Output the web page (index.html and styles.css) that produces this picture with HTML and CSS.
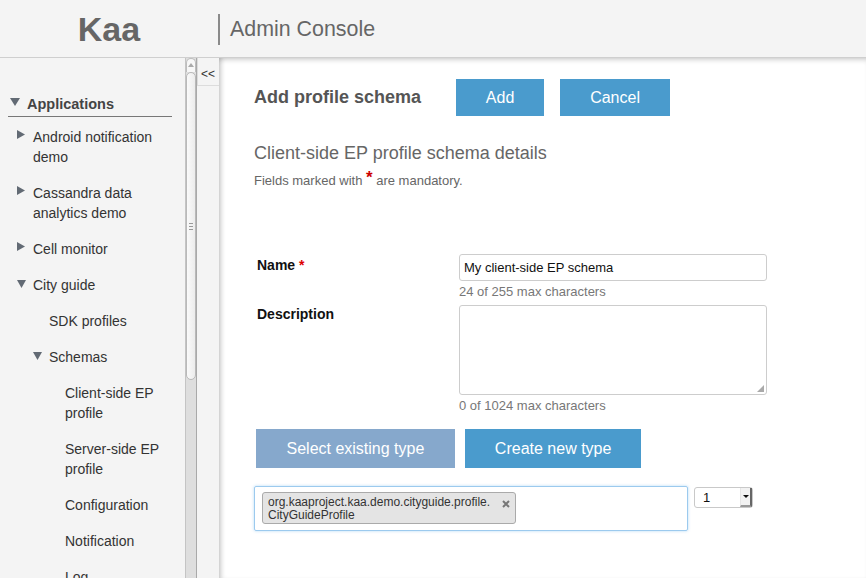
FILE: index.html
```html
<!DOCTYPE html>
<html>
<head>
<meta charset="utf-8">
<link rel="stylesheet" href="styles.css">
</head>
<body>
<header class="header">
  <div class="logo">Kaa</div>
  <div class="divider"></div>
  <div class="app-title">Admin Console</div>
</header>
<div class="layout">
  <nav class="sidebar">
    <div class="nav-title"><svg class="tri-down big" viewBox="0 0 10 8"><polygon points="0,0 10,0 5,8"/></svg>Applications</div>
    <ul class="tree">
      <li class="node l1"><span class="tcol"><svg class="tri-right" viewBox="0 0 8 9"><polygon points="0,0 8,4.5 0,9"/></svg></span><span class="tx">Android notification demo</span></li>
      <li class="node l1"><span class="tcol"><svg class="tri-right" viewBox="0 0 8 9"><polygon points="0,0 8,4.5 0,9"/></svg></span><span class="tx">Cassandra data analytics demo</span></li>
      <li class="node l1"><span class="tcol"><svg class="tri-right" viewBox="0 0 8 9"><polygon points="0,0 8,4.5 0,9"/></svg></span><span class="tx">Cell monitor</span></li>
      <li class="node l1"><span class="tcol"><svg class="tri-down" viewBox="0 0 9 8"><polygon points="0,0 9,0 4.5,8"/></svg></span><span class="tx">City guide</span></li>
      <li class="node l2"><span class="tcol"></span><span class="tx">SDK profiles</span></li>
      <li class="node l2"><span class="tcol"><svg class="tri-down" viewBox="0 0 9 8"><polygon points="0,0 9,0 4.5,8"/></svg></span><span class="tx">Schemas</span></li>
      <li class="node l3"><span class="tcol"></span><span class="tx">Client-side EP profile</span></li>
      <li class="node l3"><span class="tcol"></span><span class="tx">Server-side EP profile</span></li>
      <li class="node l3"><span class="tcol"></span><span class="tx">Configuration</span></li>
      <li class="node l3"><span class="tcol"></span><span class="tx">Notification</span></li>
      <li class="node l3"><span class="tcol"></span><span class="tx">Log</span></li>
    </ul>
  </nav>
  <div class="vscroll">
    <div class="vs-up"><svg viewBox="0 0 6 4" class="vs-arrow"><polygon points="0,4 6,4 3,0"/></svg></div>
    <div class="vs-thumb"><div class="grip"><i></i><i></i><i></i></div></div>
    <div class="vs-track"></div>
  </div>
  <div class="splitter">
    <div class="collapse">&lt;&lt;</div>
  </div>
  <main class="main">
    <div class="title-row">
      <h1 class="page-title">Add profile schema</h1>
      <div class="actions">
        <button class="btn btn-add">Add</button>
        <button class="btn btn-cancel">Cancel</button>
      </div>
    </div>
    <h2 class="subtitle">Client-side EP profile schema details</h2>
    <p class="note">Fields marked with <span class="req">*</span> are mandatory.</p>

    <div class="form">
      <label class="flabel">Name <span class="req-s">*</span></label>
      <div class="fcell">
        <input class="finput" type="text" value="My client-side EP schema">
        <div class="counter">24 of 255 max characters</div>
      </div>
      <label class="flabel desc">Description</label>
      <div class="fcell">
        <div class="farea"><span class="resizer"></span></div>
        <div class="counter">0 of 1024 max characters</div>
      </div>
    </div>

    <div class="type-row">
      <button class="btn btn-select">Select existing type</button>
      <button class="btn btn-create">Create new type</button>
    </div>

    <div class="ctl-row">
      <div class="tagbox">
        <div class="chip">
          <span class="chip-text">org.kaaproject.kaa.demo.cityguide.profile.<br>CityGuideProfile</span>
          <svg class="chip-x" viewBox="0 0 8 8"><path d="M1 1L7 7M7 1L1 7"/></svg>
        </div>
      </div>
      <div class="qty">
        <span class="qty-val">1</span>
        <span class="qty-btn"><svg viewBox="0 0 6 3"><polygon points="0,0 6,0 3,3"/></svg></span>
      </div>
    </div>
  </main>
</div>
</body>
</html>
```

FILE: styles.css
```css
* { box-sizing: border-box; }
html, body { margin: 0; padding: 0; }
body {
  font-family: "Liberation Sans", Arial, sans-serif;
  width: 866px;
  height: 578px;
  overflow: hidden;
  background: #fff;
  color: #333;
}

.header {
  height: 58px;
  background: #f4f4f4;
  border-bottom: 1px solid #cfcfcf;
  display: flex;
  align-items: center;
}
.logo {
  width: 218px;
  text-align: center;
  font-size: 34px;
  font-weight: bold;
  color: #666;
  padding-top: 1px;
}
.divider {
  width: 2px;
  height: 31px;
  background: #8a8a8a;
  margin-top: 1px;
}
.app-title {
  padding-left: 10px;
  font-size: 21.4px;
  color: #666;
  padding-top: 1px;
}

.layout {
  display: flex;
  height: 520px;
}

.sidebar {
  width: 185px;
  background: #f4f4f4;
  padding: 36px 13px 0 8px;
  overflow: hidden;
}
.nav-title {
  font-size: 14.5px;
  font-weight: bold;
  color: #444;
  line-height: 20px;
  padding-bottom: 2px;
  border-bottom: 1px solid #777;
  display: flex;
  align-items: flex-start;
}
.tri-down.big {
  width: 10px;
  height: 8px;
  margin: 4px 7px 0 2px;
}
.tri-down, .tri-right { fill: #626a74; display: block; }
.tri-right { width: 8px; height: 9px; margin: 3px 0 0 9px; }
.tcol .tri-down { width: 9px; height: 8px; margin: 5px 0 0 9px; }

.tree {
  list-style: none;
  margin: 2px 0 0;
  padding: 0;
}
.node {
  display: flex;
  align-items: flex-start;
  padding: 8px 0;
  font-size: 14px;
  line-height: 20px;
  color: #333;
}
.tcol { width: 25px; flex: none; }
.l2 { padding-left: 16px; }
.l3 { padding-left: 32px; }

.vscroll {
  width: 12px;
  flex: none;
  display: flex;
  flex-direction: column;
  background: #dedede;
  border-left: 1px solid #c4c4c4;
  border-right: 1px solid #a9a9a9;
}
.vs-up {
  height: 14px;
  background: #f7f7f7;
  border: 1px solid #bdbdbd;
  border-bottom: none;
  border-radius: 6px 6px 0 0;
  display: flex;
  justify-content: center;
  padding-top: 4px;
}
.vs-arrow { width: 6px; height: 4px; fill: #aaa; }
.vs-thumb {
  height: 308px;
  background: linear-gradient(to right, #fafafa, #ececec);
  border: 1px solid #b9b9b9;
  border-radius: 6px;
  display: flex;
  align-items: center;
  justify-content: center;
}
.grip { display: flex; flex-direction: column; gap: 2px; }
.grip i { display: block; width: 4px; height: 1px; background: #999; }
.vs-track { flex: 1; }

.splitter {
  width: 22px;
  flex: none;
  background: #f4f4f4;
}
.collapse {
  height: 28px;
  border-left: 1px solid #dcdcdc;
  border-bottom: 1px solid #dcdcdc;
  font-size: 12px;
  color: #333;
  text-align: center;
  line-height: 20px;
  padding: 6px 1px 0 0;
}

.main {
  flex: 1;
  background: #fff;
  padding: 21px 0 0 35px;
  box-shadow: inset 5px 0 5px -3px rgba(0,0,0,0.22), inset 0 5px 5px -3px rgba(0,0,0,0.18);
}

.title-row {
  display: flex;
  align-items: center;
}
.page-title {
  margin: 0;
  font-size: 18px;
  font-weight: bold;
  color: #555;
}
.actions {
  display: flex;
  gap: 16px;
  margin-left: 35px;
}
.btn {
  font-family: "Liberation Sans", Arial, sans-serif;
  font-size: 16px;
  color: #fff;
  border: none;
  padding: 0 30px;
  margin: 0;
  cursor: pointer;
}
.btn-add, .btn-cancel {
  height: 37px;
  background: #4a9bcd;
}
.btn-add { width: 88px; padding: 0; }
.btn-cancel { width: 110px; padding: 0; }

.subtitle {
  margin: 26px 0 0;
  font-size: 18px;
  font-weight: normal;
  line-height: 22px;
  color: #666;
}
.note {
  margin: 9px 0 0;
  font-size: 13px;
  line-height: 16px;
  color: #666;
}
.req {
  color: #c00;
  font-weight: bold;
  font-size: 17px;
  position: relative;
  top: -2px;
  line-height: 0;
}

.form {
  display: grid;
  grid-template-columns: 202px 308px;
  margin: 65px 0 0 3px;
  row-gap: 5px;
}
.flabel {
  font-size: 14px;
  font-weight: bold;
  line-height: 20px;
  color: #111;
  padding-top: 1px;
}
.flabel.desc { padding-top: 0; margin-top: -1px; }
.req-s { color: #d00; }
.finput {
  display: block;
  width: 308px;
  height: 27px;
  border: 1px solid #cdcdcd;
  border-radius: 3px;
  padding: 0 4px;
  font-family: "Liberation Sans", Arial, sans-serif;
  font-size: 13px;
  color: #111;
  margin: 0;
}
.farea {
  display: flex;
  justify-content: flex-end;
  align-items: flex-end;
  width: 308px;
  height: 90px;
  border: 1px solid #cdcdcd;
  border-radius: 3px;
  padding: 2px;
}
.resizer {
  width: 7px;
  height: 7px;
  background-image: radial-gradient(circle, #aaa 0.8px, transparent 1px);
  background-size: 2px 2px;
  clip-path: polygon(100% 0, 100% 100%, 0 100%);
}
.counter {
  font-size: 13px;
  line-height: 16px;
  color: #777;
  margin-top: 3px;
}

.type-row {
  display: flex;
  gap: 10px;
  margin: 15px 0 0 2px;
}
.btn-select, .btn-create { height: 39px; }
.btn-select { background: #86a8cc; padding: 0 30.5px; }
.btn-create { background: #4a9bcd; }

.ctl-row {
  display: flex;
  align-items: flex-start;
  gap: 6px;
  margin: 18px 0 0 0;
}
.tagbox {
  width: 434px;
  height: 45px;
  border: 1px solid #9ccaee;
  border-radius: 2px;
  box-shadow: 0 0 3px rgba(82,168,236,0.45);
  padding: 5px 7px;
}
.chip {
  display: inline-flex;
  align-items: flex-start;
  width: 254px;
  height: 32px;
  background: #e4e4e4;
  border: 1px solid #aaa;
  border-radius: 3px;
  padding: 3px 5px 0 5px;
}
.chip-text {
  font-size: 12px;
  line-height: 13px;
  color: #333;
  flex: 1;
}
.chip-x {
  width: 8px;
  height: 8px;
  margin-top: 4px;
  stroke: #777;
  stroke-width: 2;
  fill: none;
}

.qty {
  width: 59px;
  height: 21px;
  margin-top: 1px;
  border: 1px solid #c9c9c9;
  border-radius: 3px;
  display: flex;
  align-items: stretch;
}
.qty-val {
  flex: 1;
  font-size: 13px;
  line-height: 19px;
  padding-left: 8px;
  color: #111;
}
.qty-btn {
  width: 12px;
  background: #f2f2f2;
  border-left: 1px solid #e6e6e6;
  border-right: 2px solid #666;
  border-bottom: 2px solid #999;
  display: flex;
  align-items: center;
  justify-content: center;
}
.qty-btn svg { width: 6px; height: 3px; fill: #111; }
```
